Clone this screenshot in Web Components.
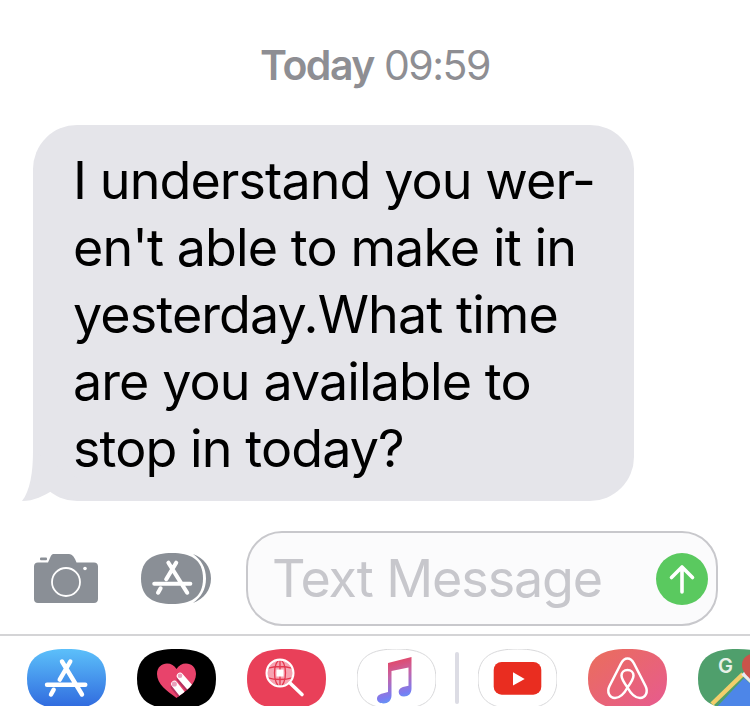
<!DOCTYPE html>
<html><head><meta charset="utf-8">
<style>
html,body{margin:0;padding:0;background:#fff;width:750px;height:707px;overflow:hidden;font-family:Inter,"Liberation Sans",sans-serif}
sms-screen{width:750px;height:707px}
</style></head><body>
<sms-screen>
  <msg-time><b>Today</b> 09:59</msg-time>
  <msg-bubble>I understand you wer-<br>en't able to make it in<br>yesterday.What time<br>are you available to<br>stop in today?</msg-bubble>
  <msg-composer></msg-composer>
  <app-strip></app-strip>
</sms-screen>
<script>
function def(name, css, html){
  customElements.define(name, class extends HTMLElement{
    constructor(){super();const s=this.attachShadow({mode:'open'});s.innerHTML='<style>'+css+'</style>'+html;}
  });
}
const ASTROKES='<g fill="none" stroke-linecap="round" stroke="#fff" stroke-width="4.4"><path d="M35 12.5 55 45.5M43.3 12.5 32.7 30.7M26.7 40.7 24 45.5M20 35.7H58.3"/></g>';
const SQ='M0 30C0 7 15 0 39.5 0S79 7 79 30 64 60 39.5 60 0 53 0 30Z';
const HEART='M39.5 49C30 42 20 35 20 25 20 18 25 14.5 30 14.5 34 14.5 37.5 16.5 39.5 20 41.5 16.5 45 14.5 49 14.5 54.5 14.5 59 18.5 59 25 59 35 49 42 39.5 49Z';
const GLYPHS={
 store:{defs:'<linearGradient id="g" x1="0" y1="0" x2="0" y2="1"><stop offset="0" stop-color="#5cc0fa"/><stop offset="1" stop-color="#2f68de"/></linearGradient>',fill:'url(#g)',body:ASTROKES},
 heart:{defs:`<clipPath id="c"><path d="${HEART}"/></clipPath>`,fill:'#000',body:`<path d="${HEART}" fill="#e8436b"/><g clip-path="url(#c)" fill="none" stroke-linecap="round"><path d="M43 30 56 45M37 38 46 49" stroke="#b5315f" stroke-width="6.5"/><path d="M43 27 56 42M37.3 35 46 46" stroke="#fff" stroke-width="6.5"/></g><circle cx="43" cy="26.8" r="2.3" fill="#eaa0bc"/><circle cx="37.3" cy="35" r="2.6" fill="#eaa0bc"/>`},
 finder:{defs:'<clipPath id="c"><circle cx="33" cy="24" r="12.5"/></clipPath>',fill:'#e94059',body:'<circle cx="33" cy="24" r="12.5" fill="#f7a3b1"/><g clip-path="url(#c)" stroke="#e3384f" stroke-width="1.3" fill="none"><ellipse cx="33" cy="24" rx="5.5" ry="13"/><path d="M20 19.5Q33 15.5 46 19.5M20 28.5Q33 32.5 46 28.5M33 10V38"/></g><rect x="29.500" y="20.5" width="7" height="7" fill="#fff"/><circle cx="33" cy="24" r="13.4" fill="none" stroke="#fff" stroke-width="2.2"/><path d="M43 34 55 45.5" stroke="#fff" stroke-width="3.6" stroke-linecap="round"/>'},
 music:{defs:'<linearGradient id="g" gradientUnits="userSpaceOnUse" x1="33" y1="8" x2="46" y2="54"><stop offset="0" stop-color="#ea3f57"/><stop offset=".4" stop-color="#c565a8"/><stop offset=".8" stop-color="#7a7cf2"/><stop offset="1" stop-color="#52a8f5"/></linearGradient>',fill:'#fff',stroke:1,body:'<path d="M31 14 54.5 8V39.5C54.5 44.5 51.5 47.5 47 47.5 43.5 47.5 41.7 45.5 41.7 43 41.7 40 44 38.5 47 37.8L51.5 36.8V18.5L34.5 22V46.5C34.5 51.5 31 54.5 26.5 54.5 23 54.5 20 52.8 20 49.8 20 46.8 22.5 45.2 25.5 44.5L31 43Z" fill="url(#g)"/>'},
 youtube:{fill:'#fff',stroke:1,body:'<rect x="15.7" y="13" width="47.6" height="32.7" rx="8" fill="#e92d20"/><path d="M35 23.3 46.7 30 35 36.5Z" fill="#fff"/>'},
 airbnb:{defs:'<linearGradient id="g" x1="0" y1="0" x2="1" y2="1"><stop offset="0" stop-color="#ea6e5b"/><stop offset="1" stop-color="#e75a90"/></linearGradient>',fill:'url(#g)',body:'<g fill="none" stroke="#fff" stroke-width="2.5" stroke-linejoin="round"><path d="M39.5 9.5C36.5 9.5 34.5 11.5 33 14.5L21.5 37C18.5 43 21.5 49 27 49 32 49 36 45 39.5 38.5 43 45 47 49 52 49 57.5 49 60.5 43 57.5 37L46 14.5C44.5 11.5 42.5 9.5 39.5 9.5Z"/><path d="M39.5 38.5C35.5 33 33.5 30 33.5 26.5 33.5 23.5 36 21 39.5 21 43 21 45.5 23.5 45.5 26.5 45.5 30 43.5 33 39.5 38.5Z"/></g>'},
 maps:{fill:'#4f9f6c',body:'<path d="M17 60 46 29 60 42V60Z" fill="#4d86e8"/><path d="M14 55 45 25" stroke="#f2cf6b" stroke-width="4.5" fill="none"/><path d="M45 24 60 38" stroke="#e6eaf2" stroke-width="5" fill="none"/><path d="M44 16C44 8 51 4 60 4V36C52 30 44 24 44 16Z" fill="#c9534a"/><text x="27.5" y="24" text-anchor="middle" font-family="Inter,Liberation Sans,sans-serif" font-size="20" font-weight="600" fill="#e8f1e8">G</text>'}
};
def('sms-screen',':host{display:flex;flex-direction:column}','<slot></slot>');
def('msg-time',':host{display:block;height:125px;box-sizing:border-box;padding-top:41px;text-align:center;font:400 41px/48px Inter,"Liberation Sans",sans-serif;color:#8e8e93;letter-spacing:-1.5px}::slotted(b){font-weight:600}','<slot></slot>');
def('msg-bubble',':host{display:block;position:relative;margin-left:33px;width:601px;height:376px;box-sizing:border-box;padding:22px 0 0 40px;background:#e5e5ea;border-radius:44px;font:400 52px/67px Inter,"Liberation Sans",sans-serif;color:#000;letter-spacing:-.9px;white-space:nowrap}svg{position:absolute;left:-11px;bottom:0}','<slot></slot><svg width="60" height="50" viewBox="0 0 60 50"><path d="M11 0C11 22 8 40 0 50 12 50 22 45 31 39 40 46 50 49 60 50V30Z" fill="#e5e5ea"/></svg>');
def('msg-composer',`:host{display:flex;align-items:center;height:95px;margin-top:30px;padding-left:34px;width:718px;box-sizing:border-box}
.cam{flex:none;width:64px;height:49px;margin-right:43px;display:block}.st{flex:none;width:70px;height:51px;margin-right:35px;display:block}
.field{flex:1;height:95px;box-sizing:border-box;border:2px solid #c8c8cc;border-radius:36px;background:#fbfbfc;display:flex;align-items:center;justify-content:space-between;padding:0 8px 0 24px;font:400 52px/60px Inter,"Liberation Sans",sans-serif;letter-spacing:-1.1px;color:#c7c7cc}
.send{width:52px;height:52px;display:block;flex:none}`,
`<svg class="cam" viewBox="0 0 64 49"><path d="M19.5 0H34C37 0 39 1 41 5L42.5 8.5H60C62.5 8.5 64 10 64 12.5V45C64 47.5 62.5 49 60 49H4C1.5 49 0 47.5 0 45V12.5C0 10 1.5 8.5 4 8.5H14L16 4C17 1.5 18 0 19.5 0Z" fill="#8a8f96"/><rect x="6" y="3.5" width="7" height="2.8" rx="1" fill="#8a8f96"/><circle cx="32" cy="28" r="14" fill="none" stroke="#fff" stroke-width="1.8"/><circle cx="51" cy="14.5" r="1.8" fill="#fff"/></svg>
<svg class="st" viewBox="0 0 70 51"><path d="M0 25.5C0 6 13 0 31 0S62 6 62 25.5 49 51 31 51 0 45 0 25.5Z" fill="#8a8f96"/><path d="M52 1C63 5 70 14 70 25.5 70 37 63 46 52 50 60 44 65 37 65 25.5 65 14 60 7 52 1Z" fill="#8a8f96"/><g transform="translate(-5.5 -1.7) scale(.94 .91)">${ASTROKES}</g></svg>
<div class="field"><span>Text Message</span><svg class="send" viewBox="0 0 52 52"><circle cx="26" cy="26" r="26" fill="#5ac95f"/><path d="M26 39V14M15.5 24.5 26 14 36.5 24.5" fill="none" stroke="#fff" stroke-width="3.6" stroke-linecap="round" stroke-linejoin="round"/></svg></div>`);
def('app-strip',`:host{display:flex;align-items:flex-start;gap:31px;margin-top:8px;padding:13px 0 0 26.5px;height:72px;box-sizing:border-box;border-top:2px solid #d4d4d6;width:750px;overflow:hidden}
.pair{display:flex;align-items:flex-start;gap:19.5px;flex:none}.sep{flex:none;width:3.5px;height:52px;margin-top:3px;border-radius:2px;background:#dcdce4}`,
`<app-icon kind="store"></app-icon><app-icon kind="heart"></app-icon><app-icon kind="finder"></app-icon><div class="pair"><app-icon kind="music"></app-icon><div class="sep"></div><app-icon kind="youtube"></app-icon></div><app-icon kind="airbnb"></app-icon><app-icon kind="maps"></app-icon>`);
customElements.define('app-icon',class extends HTMLElement{
  constructor(){super();this.attachShadow({mode:'open'});}
  connectedCallback(){
    const g=GLYPHS[this.getAttribute('kind')];
    this.shadowRoot.innerHTML=`<style>:host{display:block;flex:none;width:79px;height:60px}svg{display:block;overflow:hidden}</style><svg width="79" height="60" viewBox="0 0 79 60"><defs>${g.defs||''}</defs><path d="${SQ}" fill="${g.fill}" ${g.stroke?'stroke="#d9d9db" stroke-width="1"':''}/>${g.body}</svg>`;
  }
});
</script>
</body></html>
